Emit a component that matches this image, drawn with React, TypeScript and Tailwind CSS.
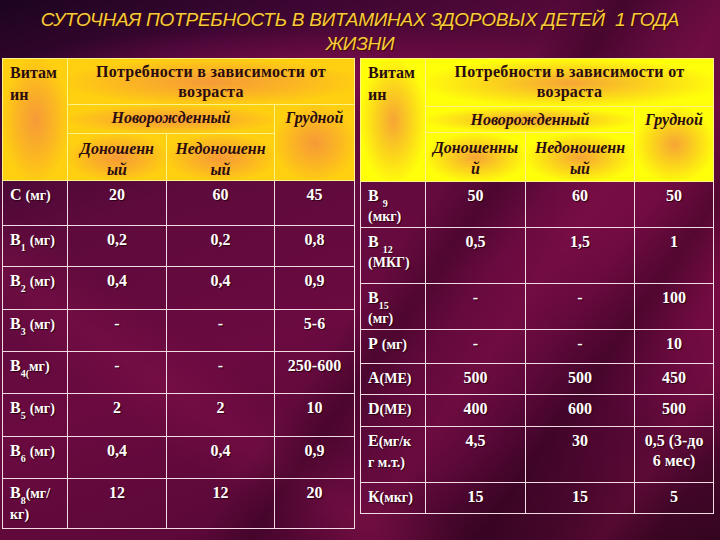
import React from "react";

const serif = "[font-family:'Liberation_Serif','Times_New_Roman',serif]";

type Row = { label: React.ReactNode; v: React.ReactNode[]; h: string };

const Sub = ({ children }: { children: React.ReactNode }) => (
  <sub className="text-[10px] align-[-3px] leading-none">{children}</sub>
);

const U = ({ children }: { children: React.ReactNode }) => (
  <span className="text-[14px]">{children}</span>
);

const leftRows: Row[] = [
  { label: <>C <U>(мг)</U></>, v: ["20", "60", "45"], h: "h-[45px]" },
  { label: <>B<Sub>1</Sub> <U>(мг)</U></>, v: ["0,2", "0,2", "0,8"], h: "h-[41px]" },
  { label: <>B<Sub>2</Sub> <U>(мг)</U></>, v: ["0,4", "0,4", "0,9"], h: "h-[43px]" },
  { label: <>B<Sub>3</Sub> <U>(мг)</U></>, v: ["-", "-", "5-6"], h: "h-[42px]" },
  { label: <>B<Sub>4(</Sub><U>мг)</U></>, v: ["-", "-", "250-600"], h: "h-[42px]" },
  { label: <>B<Sub>5</Sub> <U>(мг)</U></>, v: ["2", "2", "10"], h: "h-[43px]" },
  { label: <>B<Sub>6</Sub> <U>(мг)</U></>, v: ["0,4", "0,4", "0,9"], h: "h-[42px]" },
  { label: <>B<Sub>8</Sub><U>(мг/<br />кг)</U></>, v: ["12", "12", "20"], h: "h-[50px]" },
];

const rightRows: Row[] = [
  { label: <>В <Sub>9</Sub><br /><U>(мкг)</U></>, v: ["50", "60", "50"], h: "h-[45px]" },
  { label: <>В <Sub>12</Sub><br /><U>(МКГ)</U></>, v: ["0,5", "1,5", "1"], h: "h-[56px]" },
  { label: <>B<Sub>15</Sub><br /><U>(мг)</U></>, v: ["-", "-", "100"], h: "h-[46px]" },
  { label: <>Р <U>(мг)</U></>, v: ["-", "-", "10"], h: "h-[34px]" },
  { label: <>A<U>(МЕ)</U></>, v: ["500", "500", "450"], h: "h-[31px]" },
  { label: <>D<U>(МЕ)</U></>, v: ["400", "600", "500"], h: "h-[32px]" },
  { label: <>E<U>(мг/к<br />г м.т.)</U></>, v: ["4,5", "30", <>0,5 (3-до<br />6 мес)</>], h: "h-[56px]" },
  { label: <>К<U>(мкг)</U></>, v: ["15", "15", "5"], h: "h-[31px]" },
];

function VitTable({
  rows,
  cols,
  right,
}: {
  rows: Row[];
  cols: string[];
  right?: boolean;
}) {
  const hb = right
    ? "bg-[radial-gradient(ellipse_at_center,#f6a436_0%,#fbd41c_40%,#ffff0a_75%)]"
    : "bg-[radial-gradient(ellipse_at_center,#f59a38_0%,#fbb424_40%,#ffd010_75%)]";
  const hc = `border border-[#fff48a] ${hb} text-[#2a0c10] align-top`;
  const bc =
    "border border-[#f3dbe3] align-top text-white text-[16px] font-bold pt-[4px] leading-[20px] [text-shadow:1px_1px_1px_#2a0010]";
  const dn = right ? (
    <>
      Доношенны<br />й
    </>
  ) : (
    <>
      Доношенн<br />ый
    </>
  );
  return (
    <table className={`table-fixed border-collapse ${serif}`}>
      <colgroup>
        <col className={cols[0]} />
        <col className={cols[1]} />
        <col className={cols[2]} />
        <col className={cols[3]} />
      </colgroup>
      <thead>
        <tr className={right ? "h-[48px]" : "h-[46px]"}>
          <th rowSpan={3} className={`${hc} text-left pl-[7px] pt-[3px] font-bold text-[16px] leading-[22px]`}>
            Витам<br />ин
          </th>
          <th colSpan={3} className={`${hc} text-center pt-[3px] font-bold text-[16px] leading-[20px] tracking-[0.3px]`}>
            Потребности в зависимости от<br />возраста
          </th>
        </tr>
        <tr className={right ? "h-[26px]" : "h-[29px]"}>
          <th colSpan={2} className={`${hc} text-center pt-[3px] italic font-bold text-[16px] leading-[20px]`}>
            Новорожденный
          </th>
          <th rowSpan={2} className={`${hc} text-center pt-[3px] italic font-bold text-[16px] leading-[20px]`}>
            Грудной
          </th>
        </tr>
        <tr className={right ? "h-[49px]" : "h-[44px]"}>
          <th className={`${hc} text-center pt-[4px] italic font-bold text-[16px] leading-[21px]`}>{dn}</th>
          <th className={`${hc} text-center pt-[4px] italic font-bold text-[16px] leading-[21px]`}>
            Недоношенн<br />ый
          </th>
        </tr>
      </thead>
      <tbody>
        {rows.map((r, i) => (
          <tr key={i} className={r.h}>
            <td className={`${bc} text-left pl-[7px]`}>{r.label}</td>
            {r.v.map((v, j) => (
              <td key={j} className={`${bc} text-center`}>
                {v}
              </td>
            ))}
          </tr>
        ))}
      </tbody>
    </table>
  );
}

export default function App() {
  return (
    <div className="w-[720px] h-[540px] overflow-hidden bg-[linear-gradient(125deg,transparent_52%,rgba(30,0,20,0.35)_57%,transparent_62%,rgba(150,20,80,0.25)_67%,transparent_72%,rgba(30,0,20,0.4)_78%,transparent_84%,rgba(150,20,80,0.25)_89%,transparent_94%),linear-gradient(35deg,transparent_20%,rgba(140,20,80,0.3)_26%,transparent_32%),radial-gradient(ellipse_55%_12%_at_45%_14%,#7e0c4c_0%,transparent_80%),radial-gradient(ellipse_30%_50%_at_100%_45%,#7c0c46_0%,transparent_80%),linear-gradient(160deg,#1c0420_0%,#3c0632_14%,#5e0a3c_32%,#6a0a40_55%,#5a0838_78%,#34051f_100%)]">
      <div className="h-[58px] pt-[8px] text-center italic text-[19px] leading-[24px] tracking-[-0.25px] text-[#f8cc3c] [font-family:'Liberation_Sans',Arial,sans-serif] [text-shadow:1px_1px_0_#3a0a00]">
        СУТОЧНАЯ ПОТРЕБНОСТЬ В ВИТАМИНАХ ЗДОРОВЫХ ДЕТЕЙ&nbsp; 1 ГОДА
        <br />
        ЖИЗНИ
      </div>
      <div className="flex items-start gap-[5px] pl-[2px]">
        <VitTable rows={leftRows} cols={["w-[65px]", "w-[99px]", "w-[108px]", "w-[80px]"]} />
        <VitTable rows={rightRows} cols={["w-[65px]", "w-[100px]", "w-[109px]", "w-[79px]"]} right />
      </div>
    </div>
  );
}
